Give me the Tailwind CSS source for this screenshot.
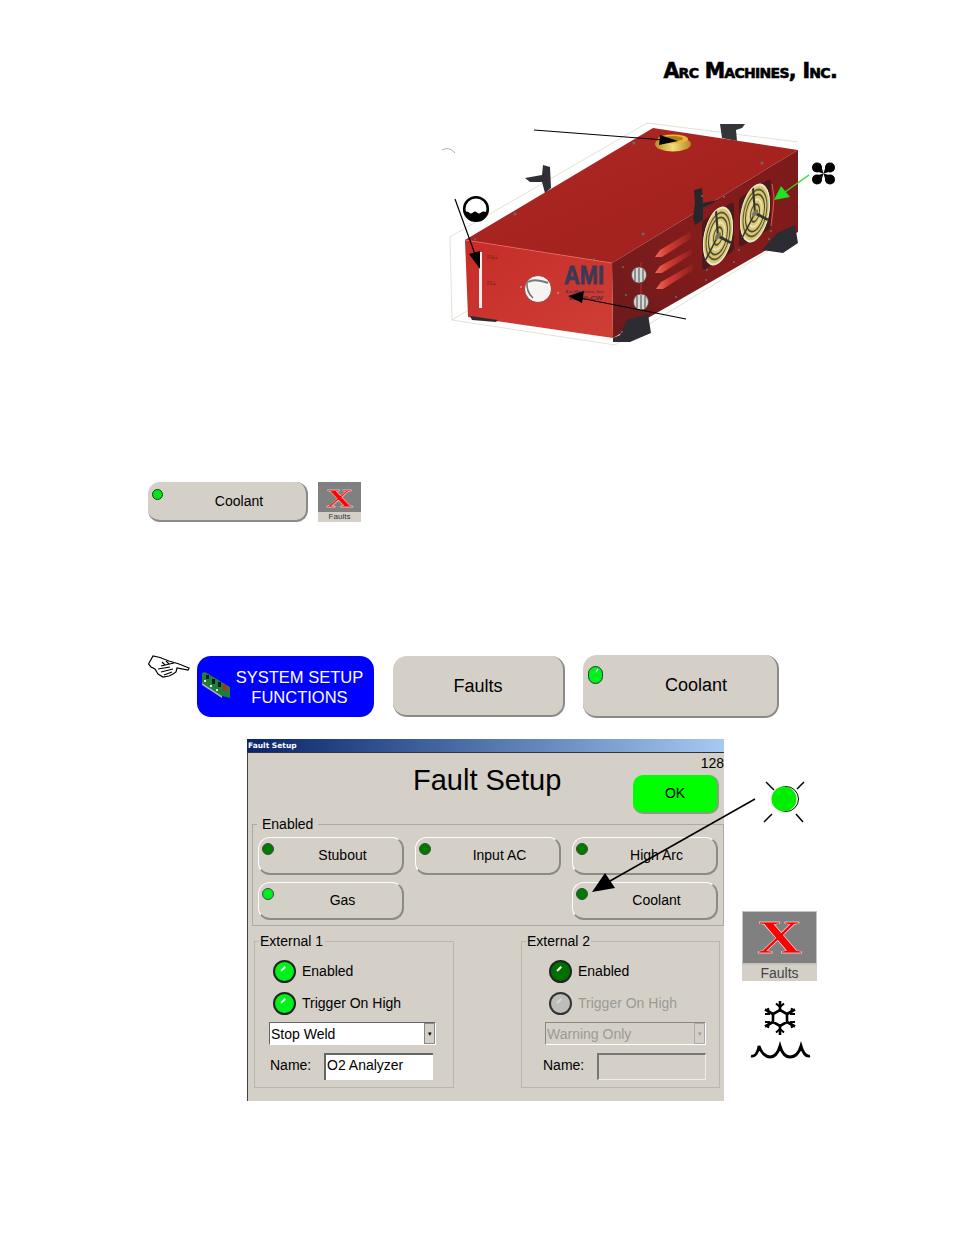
<!DOCTYPE html>
<html>
<head>
<meta charset="utf-8">
<script src="https://cdn.jsdelivr.net/npm/@tailwindcss/browser@4"></script>
</head>
<body class="bg-white">
<div class="relative w-[954px] h-[1235px] overflow-hidden bg-white font-['Liberation_Sans',Arial,sans-serif] text-black">

  <!-- Running head -->
  <header class="flex justify-end h-[110px] pt-[57px] pr-[117px]">
    <span class="font-['DejaVu_Sans',sans-serif] font-bold [font-variant:small-caps] text-[20.500px] leading-[28px] tracking-[-0.700px] [-webkit-text-stroke:0.6px_black] whitespace-nowrap">Arc Machines, Inc.</span>
  </header>

  <!-- Machine figure -->
  <svg class="block ml-[430px]" width="420" height="250" viewBox="430 110 420 250">
    <defs>
      <linearGradient id="top" x1="0" y1="0" x2="1" y2="1"><stop offset="0" stop-color="#b02a26"/><stop offset="0.5" stop-color="#a6231f"/><stop offset="1" stop-color="#a0201e"/></linearGradient>
      <linearGradient id="front" x1="0" y1="0" x2="1" y2="1"><stop offset="0" stop-color="#c62c28"/><stop offset="1" stop-color="#cf3f36"/></linearGradient>
      <linearGradient id="side" x1="0" y1="1" x2="1" y2="0"><stop offset="0" stop-color="#6c1a1b"/><stop offset="0.55" stop-color="#861c1c"/><stop offset="1" stop-color="#7c1a1a"/></linearGradient>
      <linearGradient id="gold" x1="0" y1="0" x2="1" y2="0"><stop offset="0" stop-color="#b98f1e"/><stop offset="0.5" stop-color="#f3dc7c"/><stop offset="1" stop-color="#b4891c"/></linearGradient>
      <linearGradient id="slot" x1="0" y1="0" x2="1" y2="0"><stop offset="0" stop-color="#ee6a58"/><stop offset="0.35" stop-color="#d23c32"/><stop offset="1" stop-color="#8c1f1e"/></linearGradient>
    </defs>
    <!-- ghost box -->
    <g fill="none" stroke="#dcdac8" stroke-width="0.8">
      <path d="M450 237 L452 320 L615 345 L770 250"/>
      <path d="M450 237 L647 123 L798 142"/>
      <path d="M452 320 L480 303"/>
      <path d="M468 300 L612 215"/>
    </g>
    <path d="M442 150 Q449 146 455 153" fill="none" stroke="#9a9a9a" stroke-width="0.8"/>
    <!-- back latch -->
    <path d="M720 124 L745 124 L742 128 L736 130 L737 141 L722 138 Z" fill="#34343a"/>
    <!-- box faces -->
    <polygon points="653,128 798,150 612,263 465,240" fill="url(#top)"/>
    <polygon points="612,263 798,150 798,232 770,248 613,338" fill="url(#side)"/>
    <polygon points="465,240 612,263 613,338 468,317" fill="url(#front)"/>
    <path d="M465 240 L612 263" stroke="#e2665c" stroke-width="0.8"/>
    <!-- feet -->
    <polygon points="470,316 498,320 496,322 472,320" fill="#2a2a30"/>
    <polygon points="613,338 620,335 627,320 648,314 651,333 630,342 613,342" fill="#2c2c32"/>
    <polygon points="762,250 777,233 795,225 798,243 783,253" fill="#2c2c32"/>
    <!-- cap -->
    <ellipse cx="673" cy="144" rx="18" ry="7.500" fill="url(#gold)"/>
    <ellipse cx="673" cy="139" rx="15" ry="4.500" fill="#e6b53a"/>
    <ellipse cx="673" cy="138.500" rx="10" ry="2.500" fill="#a97f18"/>
    <!-- left latch -->
    <path d="M525 178 L542 175 L543 165 L550 167 L551 188 L545 193 L542 182 L530 182 Z" fill="#2f2f36"/>
    <!-- middle latch -->
    <path d="M694 190 L702 188 L703 203 L718 200 L703 208 L703 220 L695 225 L693 217 L695 203 Z" fill="#26262c"/>
    <!-- fans -->
    <g transform="translate(718 236) skewY(-32)">
      <rect x="-16" y="-25" width="32" height="50" rx="4" fill="#4a1a1c"/>
      <circle r="15" fill="#d9c868" transform="scale(1 1.850)"/>
      <g fill="none" stroke="#4a483e" stroke-width="1" transform="scale(1 1.850)"><circle r="14.500" stroke="#ece8d8"/><circle r="12" stroke="#59564a"/><circle r="9.500"/><circle r="7" stroke="#e6e2d0"/><circle r="4.500"/></g>
      <path d="M0 0 L-2 -26 M0 0 L13 15 M0 0 L-13 17" stroke="#35332c" stroke-width="2"/>
      <circle r="3" fill="#7a7560"/>
    </g>
    <g transform="translate(755 213) skewY(-32)">
      <rect x="-16" y="-25" width="32" height="50" rx="4" fill="#4a1a1c"/>
      <circle r="15" fill="#d9c868" transform="scale(1 1.850)"/>
      <g fill="none" stroke="#4a483e" stroke-width="1" transform="scale(1 1.850)"><circle r="14.500" stroke="#ece8d8"/><circle r="12" stroke="#59564a"/><circle r="9.500"/><circle r="7" stroke="#e6e2d0"/><circle r="4.500"/></g>
      <path d="M0 0 L-2 -26 M0 0 L13 15 M0 0 L-13 17" stroke="#35332c" stroke-width="2"/>
      <circle r="3" fill="#7a7560"/>
    </g>
    <path d="M772 184 L774 197 L773 211 L771 226" fill="none" stroke="#e2584c" stroke-width="1"/>
    <!-- vents -->
    <polygon points="655,257 660,250 690,232 692,238 662,257" fill="url(#slot)"/>
    <polygon points="655,273 660,266 692,249 692,254 662,273" fill="url(#slot)"/>
    <polygon points="656,289 661,282 693,264 693,270 663,289" fill="url(#slot)"/>
    <!-- connectors -->
    <path d="M641 262 V295" stroke="#d63a34" stroke-width="0.700"/>
    <ellipse cx="639" cy="275" rx="7.500" ry="8" fill="#d8d8d4" stroke="#4c4c4c" stroke-width="0.800"/>
    <path d="M635 269 V281 M639 268 V282 M643 269 V281" stroke="#555" stroke-width="1.100"/>
    <ellipse cx="641" cy="302" rx="7.500" ry="8" fill="#d8d8d4" stroke="#4c4c4c" stroke-width="0.800"/>
    <path d="M637 296 V308 M641 295 V309 M645 296 V308" stroke="#555" stroke-width="1.100"/>
    <!-- bolts -->
    <g fill="#6f6a70">
      <circle cx="634" cy="143" r="1.500"/><circle cx="762" cy="163" r="1.500"/><circle cx="515" cy="214" r="1.500"/><circle cx="643" cy="234" r="1.500"/><circle cx="475" cy="239" r="1"/><circle cx="594" cy="259" r="1"/><circle cx="724" cy="197" r="1"/>
      <circle cx="623" cy="267" r="1"/><circle cx="626" cy="295" r="1"/><circle cx="622" cy="332" r="1"/><circle cx="676" cy="297" r="1"/><circle cx="702" cy="196" r="1"/>
      <circle cx="734" cy="262" r="1"/><circle cx="707" cy="270" r="1"/><circle cx="706" cy="280" r="1"/><circle cx="739" cy="250" r="1"/><circle cx="769" cy="239" r="1"/><circle cx="771" cy="231" r="1"/>
    </g>
    <!-- front panel -->
    <rect x="479" y="252" width="3" height="56" fill="#f5f0ee"/>
    <text x="487" y="259" font-size="4.500" fill="#5e2320" font-family="Liberation Sans">FULL</text>
    <text x="487" y="285" font-size="4.500" fill="#5e2320" font-family="Liberation Sans">FILL</text>
    <circle cx="538" cy="289" r="13.500" fill="#f6f4f2" stroke="#8a2a26" stroke-width="0.800"/>
    <path d="M528 282 Q534 278 548 283" stroke="#77787c" stroke-width="2" fill="none"/>
    <path d="M527 281 Q526 292 533 298" stroke="#6f6a68" stroke-width="1.500" fill="none"/>
    <circle cx="521" cy="287" r="0.900" fill="#a8a09c"/><circle cx="558" cy="293" r="0.900" fill="#a8a09c"/>
    <text x="564" y="284" font-size="26" font-weight="bold" textLength="40" lengthAdjust="spacingAndGlyphs" fill="#3b3a55" stroke="#3b3a55" stroke-width="0.800" font-family="Liberation Sans">AMI</text>
    <text x="565" y="292.500" font-size="3.500" font-weight="bold" textLength="39" lengthAdjust="spacingAndGlyphs" fill="#433b52" font-family="Liberation Sans">Arc Machines, Inc.</text>
    <text x="569" y="300" font-size="6" font-weight="bold" textLength="34" lengthAdjust="spacingAndGlyphs" fill="#5b2a38" font-family="Liberation Sans">M300-CW</text>
    <!-- callout arrows -->
    <path d="M534 130 L665 140" stroke="#000" stroke-width="1.200"/>
    <polygon points="678,141 660,135 659,145" fill="#000"/>
    <path d="M455 199 L476 257" stroke="#000" stroke-width="1.200"/>
    <polygon points="480,269 469,254 480,251" fill="#000"/>
    <path d="M686 319 L580 298" stroke="#000" stroke-width="1.200"/>
    <polygon points="568,296 584,291 582,303" fill="#000"/>
    <path d="M809 175 L785 192" stroke="#22e022" stroke-width="1.300"/>
    <polygon points="774,200 781,186 790,197" fill="#22e022"/>
    <!-- water level icon -->
    <circle cx="476" cy="209" r="11.800" fill="#fff" stroke="#000" stroke-width="2.600"/>
    <path d="M465 212.500 Q467 210.500 469 212.500 T473 212.500 T477 212.500 T481 212.500 T487 212.500 A11.500 11.500 0 0 1 465 212.500 Z" fill="#000"/>
    <!-- fan icon -->
    <g fill="#000" transform="translate(823.500 173.500)">
      <circle cx="-6.500" cy="-6" r="5"/><polygon points="0,0 -10.500,-3 -3,-10"/>
      <circle cx="6.500" cy="-6" r="5"/><polygon points="0,0 10.500,-3 3,-10"/>
      <circle cx="-6.500" cy="6" r="5"/><polygon points="0,0 -10.500,3 -3,10"/>
      <circle cx="6.500" cy="6" r="5"/><polygon points="0,0 10.500,3 3,10"/>
    </g>
  </svg>

  <!-- First button row -->
  <section class="flex items-start gap-[10px] mt-[122px] pl-[148px]">
    <div class="relative flex items-center justify-center w-[160px] h-[40px] pl-[24px] rounded-[12px] bg-[#d4d0c8] border-r-2 border-b-2 border-[#8c8a86] text-[14px]">
      <span class="absolute left-[4px] top-[7px] w-[11px] h-[11px] rounded-full border border-[#1a3a1a] bg-[#00e81a]"></span>
      Coolant
    </div>
    <div class="flex flex-col w-[43px] h-[40px]">
      <div class="h-[30px] bg-[#808080]">
        <svg class="block" width="43" height="30" viewBox="0 0 43 30"><text x="8" y="24.500" font-size="26" font-weight="bold" textLength="27" lengthAdjust="spacingAndGlyphs" fill="#ff0000" stroke="#ffffff" stroke-width="0.300" font-family="Liberation Serif">X</text></svg>
      </div>
      <div class="h-[10px] bg-[#d4d0c8] text-[8px] leading-[10px] text-center text-[#333]">Faults</div>
    </div>
  </section>

  <!-- Second button row -->
  <section class="flex items-start mt-[133px] pl-[148px]">
    <svg class="w-[42px] h-[24px] shrink-0" viewBox="0 0 42 24" fill="none" stroke="#000" stroke-width="1.200">
      <path d="M0.500 9 L5 1 L12 2.500 L21 6 L31 9 L41 13 L40 15 L29 13 L28 17 L25 19 L21 21 L15 22 L10 19 L7 14 L3 12 Z" fill="#fff"/>
      <path d="M13 11 L26 8 M10 14 L22 12 M13 17 L25 14 M16 20 L24 17 M14 7 L17 10 M18 6 L21 9"/>
    </svg>
    <div class="relative flex items-center justify-center w-[177px] h-[61px] mt-[1px] ml-[7px] pl-[28px] rounded-[14px] bg-[#0000ff] text-white text-[16.500px] leading-[20px] text-center">
      <svg class="absolute left-[4px] top-[16px]" width="30" height="28" viewBox="0 0 30 28">
        <polygon points="1,1 4,0 29,15 29,26 21,24 1,11" fill="#1c7f3c"/>
        <polygon points="1,11 21,24 21,26 1,13" fill="#b0b5a0"/>
        <g fill="#101510"><rect x="5" y="3" width="3" height="4"/><rect x="11" y="7" width="3" height="5"/><rect x="17" y="10" width="3" height="5"/></g>
        <rect x="22" y="13" width="4" height="6" fill="#b23018"/>
        <g fill="#f0f0d8"><rect x="3" y="8" width="2" height="2"/><rect x="9" y="13" width="2" height="2"/><rect x="15" y="17" width="2" height="2"/></g>
      </svg>
      <span>SYSTEM SETUP<br>FUNCTIONS</span>
    </div>
    <div class="flex items-center justify-center w-[172px] h-[61px] mt-[1px] ml-[19px] pt-[1px] rounded-[14px] bg-[#d4d0c8] border-r-2 border-b-2 border-[#8c8a86] text-[18px]">Faults</div>
    <div class="relative flex items-center justify-center w-[196px] h-[63px] ml-[18px] pl-[32px] rounded-[14px] bg-[#d4d0c8] border-r-2 border-b-2 border-[#8c8a86] text-[18px]">
      <span class="absolute left-[5px] top-[11px] w-[15px] h-[18px] rounded-full border border-[#1a3a1a] bg-[#00f020]"><span class="absolute left-[6px] top-[3px] w-[4px] h-[1px] bg-white -rotate-60"></span></span>
      Coolant
    </div>
  </section>

  <!-- Dialog and legend icons -->
  <section class="flex items-start mt-[21px] pl-[247px]">
    <div class="w-[477px] h-[362px] bg-[#d4d0c8]">
      <div class="h-[14px] pl-[1px] bg-gradient-to-r from-[#0a246a] to-[#a6caf0] text-white font-['DejaVu_Sans',sans-serif] font-bold text-[7.500px] leading-[13px] border-b border-[#333]">Fault Setup</div>
      <div class="h-[348px] border-l border-[#444]">
        <div class="flex justify-between h-[63px]">
          <h1 class="ml-[165px] mt-[9px] text-[29px] leading-[36px] font-normal">Fault Setup</h1>
          <div class="flex flex-col items-end">
            <span class="mt-[2px] text-[14px] leading-[16px]">128</span>
            <button class="w-[86px] h-[39px] mt-[4px] mr-[5px] rounded-[10px] bg-[#00ff00] border-r-2 border-b-2 border-[#8e9a88] text-[14px]">OK</button>
          </div>
        </div>

        <fieldset class="h-[110px] ml-[4px] mr-[2px] px-[5px] border border-[#aeaaa2]">
          <legend class="ml-[-1px] px-[5px] text-[14px] leading-[16px]">Enabled</legend>
          <div class="grid grid-cols-[146px_146px_146px] grid-rows-[38px_38px] gap-x-[11px] gap-y-[7px] mt-[5px] text-[14px]">
            <div class="relative flex items-center justify-center pl-[24px] rounded-[12px] border border-white border-r-2 border-b-2 border-r-[#8c8a86] border-b-[#8c8a86]"><span class="absolute left-[3px] top-[5px] w-[12px] h-[12px] rounded-full border border-[#3a4a3a] bg-[#007a00]"></span>Stubout</div>
            <div class="relative flex items-center justify-center pl-[24px] rounded-[12px] border border-white border-r-2 border-b-2 border-r-[#8c8a86] border-b-[#8c8a86]"><span class="absolute left-[3px] top-[5px] w-[12px] h-[12px] rounded-full border border-[#3a4a3a] bg-[#007a00]"></span>Input AC</div>
            <div class="relative flex items-center justify-center pl-[24px] rounded-[12px] border border-white border-r-2 border-b-2 border-r-[#8c8a86] border-b-[#8c8a86]"><span class="absolute left-[3px] top-[5px] w-[12px] h-[12px] rounded-full border border-[#3a4a3a] bg-[#007a00]"></span>High Arc</div>
            <div class="relative flex items-center justify-center pl-[24px] rounded-[12px] border border-white border-r-2 border-b-2 border-r-[#8c8a86] border-b-[#8c8a86]"><span class="absolute left-[3px] top-[5px] w-[12px] h-[12px] rounded-full border border-[#3a4a3a] bg-[#00ee20]"></span>Gas</div>
            <div></div>
            <div class="relative flex items-center justify-center pl-[24px] rounded-[12px] border border-white border-r-2 border-b-2 border-r-[#8c8a86] border-b-[#8c8a86]"><span class="absolute left-[3px] top-[5px] w-[12px] h-[12px] rounded-full border border-[#3a4a3a] bg-[#007a00]"></span>Coolant</div>
          </div>
        </fieldset>

        <div class="flex items-start mt-[7px] ml-[6px] text-[14px]">
          <fieldset class="w-[200px] h-[155px] border border-[#bab6ae]">
            <legend class="ml-[3px] px-[2px] leading-[16px]">External 1</legend>
            <div class="flex flex-col items-start pl-[14px] pt-[11px]">
              <div class="flex items-center gap-[6px] h-[22px] ml-[4px] leading-[16px]"><span class="relative w-[23px] h-[23px] rounded-full border-2 border-[#222] bg-[#00f21a]"><span class="absolute left-[5px] top-[6px] w-[6px] h-[1.500px] bg-white -rotate-45"></span></span>Enabled</div>
              <div class="flex items-center gap-[6px] h-[22px] mt-[10px] ml-[4px] leading-[16px]"><span class="relative w-[23px] h-[23px] rounded-full border-2 border-[#222] bg-[#00f21a]"><span class="absolute left-[5px] top-[6px] w-[6px] h-[1.500px] bg-white -rotate-45"></span></span>Trigger On High</div>
              <div class="flex items-stretch w-[167px] h-[23px] mt-[8px] bg-white border border-[#666] border-b-white border-r-white">
                <span class="flex-1 pl-[1px] leading-[22px]">Stop Weld</span>
                <span class="flex items-center justify-center w-[11px] bg-[#d4d0c8] border border-[#888] text-[7px] leading-none">▾</span>
              </div>
              <div class="flex items-center mt-[8px] ml-[1px] h-[27px] leading-[16px]">
                <span class="w-[54px] pb-[4px]">Name:</span>
                <span class="w-[109px] h-[27px] pl-[1px] bg-white border-l-2 border-t-2 border-[#666] leading-[20px]">O2 Analyzer</span>
              </div>
            </div>
          </fieldset>
          <fieldset class="w-[199px] h-[155px] ml-[67px] border border-[#bab6ae]">
            <legend class="ml-[4px] px-[1px] leading-[16px]">External 2</legend>
            <div class="flex flex-col items-start pl-[23px] pt-[11px]">
              <div class="flex items-center gap-[6px] h-[22px] ml-[4px] leading-[16px]"><span class="relative w-[23px] h-[23px] rounded-full border-2 border-[#222] bg-[#007000]"><span class="absolute left-[5px] top-[6px] w-[6px] h-[1.500px] bg-white -rotate-45"></span></span>Enabled</div>
              <div class="flex items-center gap-[6px] h-[22px] mt-[10px] ml-[4px] leading-[16px] text-[#9c9a94]"><span class="relative w-[23px] h-[23px] rounded-full border-2 border-[#333] bg-[#bdbdb9]"><span class="absolute left-[5px] top-[6px] w-[6px] h-[1.500px] bg-[#d8d8d4] -rotate-45"></span></span>Trigger On High</div>
              <div class="flex items-stretch w-[161px] h-[23px] mt-[8px] border border-[#8a8880] border-b-white border-r-white text-[#9c9a94]">
                <span class="flex-1 pl-[1px] leading-[22px]">Warning Only</span>
                <span class="flex items-center justify-center w-[11px] bg-[#d4d0c8] border border-[#aaa] text-[7px] leading-none">▾</span>
              </div>
              <div class="flex items-center mt-[8px] -ml-[2px] h-[27px] leading-[16px]">
                <span class="w-[54px] pb-[4px]">Name:</span>
                <span class="w-[109px] h-[27px] border-l-2 border-t-2 border-[#777] border-b border-r border-b-[#f0eee8] border-r-[#f0eee8]"></span>
              </div>
            </div>
          </fieldset>
        </div>
      </div>
    </div>

    <aside class="flex flex-col items-center w-[75px] ml-[18px]">
      <svg class="block mt-[39px] ml-[10px]" width="46" height="46" viewBox="0 0 46 46">
        <circle cx="24" cy="21" r="12.500" fill="#fff" stroke="#000" stroke-width="1"/>
        <circle cx="22" cy="21" r="12.500" fill="#00ee00"/>
        <path d="M4 4 L12 12 M42 4 L35 11 M2 44 L10 36 M41 44 L34 36" stroke="#000" stroke-width="1.500"/>
      </svg>
      <div class="flex flex-col w-[75px] h-[70px] mt-[87px]">
        <div class="h-[54px] bg-[#808080] border border-[#c4c4bc] border-b-2">
          <svg class="block" width="73" height="51" viewBox="0 0 73 51"><text x="14" y="41" font-size="46" font-weight="bold" textLength="45" lengthAdjust="spacingAndGlyphs" fill="#ff0000" stroke="#ffffff" stroke-width="0.400" font-family="Liberation Serif">X</text></svg>
        </div>
        <div class="h-[16px] bg-[#d4d0c8] text-[14px] leading-[16px] text-center text-[#444]">Faults</div>
      </div>
      <svg class="block mt-[20px] ml-[2px]" width="62" height="60" viewBox="0 0 62 60" fill="none" stroke="#000">
        <g stroke-width="2.600">
          <polygon points="30,9 37,13 37,21 30,25 23,21 23,13"/>
          <path d="M30 0 V9 M30 25 V34 M15 8.500 L23 13 M45 8.500 L37 13 M15 25.500 L23 21 M45 25.500 L37 21"/>
          <path d="M26 2.500 L30 6 L34 2.500 M26 31.500 L30 28 L34 31.500 M15 13 L19 13 L18 7 M45 13 L41 13 L42 7 M15 21 L19 21 L18 27 M45 21 L41 21 L42 27" stroke-width="2"/>
        </g>
        <path d="M1 55 C5 56 8 52 9 45 C11 52 16 56 20 56 C24 56 28 52 30 45 C32 52 36 56 40 56 C45 56 49 52 51 45 C53 52 56 56 60 55" stroke-width="2.800"/>
      </svg>
    </aside>
  </section>

  <!-- Callout arrow across the dialog -->
  <svg class="absolute left-[585px] top-[790px] pointer-events-none" width="175" height="110" viewBox="585 790 175 110">
    <path d="M755 799 L610 881" stroke="#000" stroke-width="1.500"/>
    <polygon points="592,892 605,873 615,888" fill="#000"/>
  </svg>
</div>
</body>
</html>
